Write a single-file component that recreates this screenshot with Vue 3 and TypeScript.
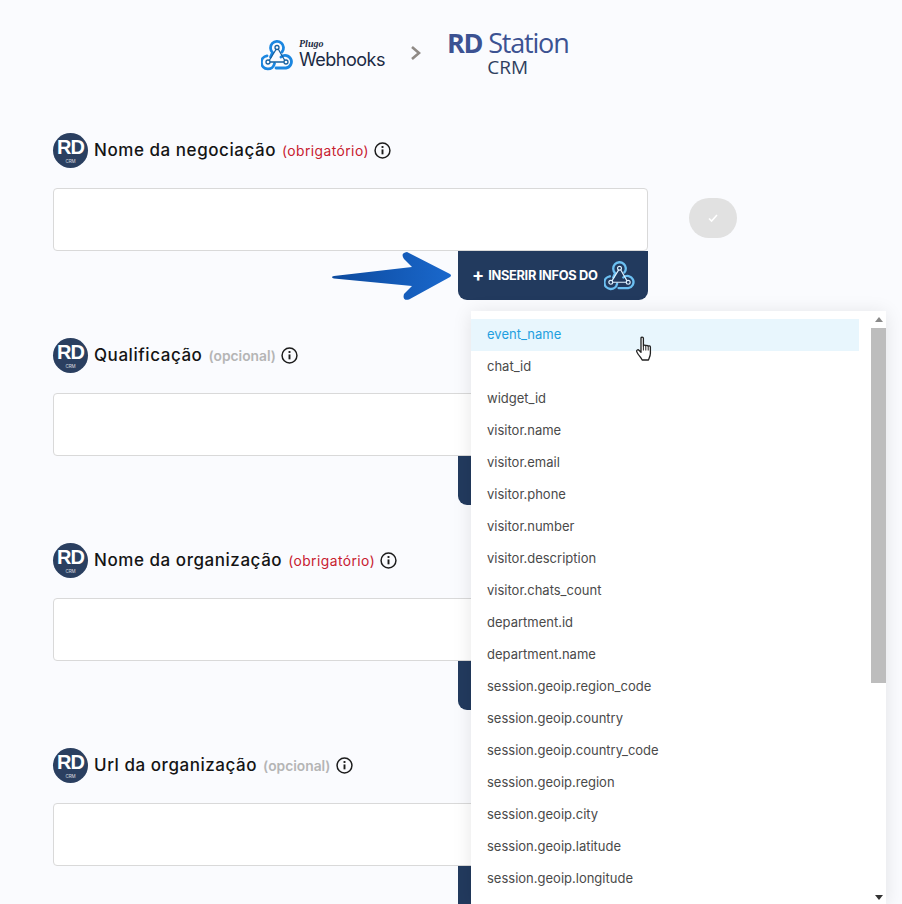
<script setup lang="ts">
interface Field {
  name: string
  note: string
  required: boolean
}

const fields: Field[] = [
  { name: 'Nome da negociação', note: '(obrigatório)', required: true },
  { name: 'Qualificação', note: '(opcional)', required: false },
  { name: 'Nome da organização', note: '(obrigatório)', required: true },
  { name: 'Url da organização', note: '(opcional)', required: false },
]

const options: string[] = [
  'event_name',
  'chat_id',
  'widget_id',
  'visitor.name',
  'visitor.email',
  'visitor.phone',
  'visitor.number',
  'visitor.description',
  'visitor.chats_count',
  'department.id',
  'department.name',
  'session.geoip.region_code',
  'session.geoip.country',
  'session.geoip.country_code',
  'session.geoip.region',
  'session.geoip.city',
  'session.geoip.latitude',
  'session.geoip.longitude',
]
</script>

<template>
  <div class="page">
    <header class="brand">
      <div class="plugo">
        <svg class="hook-logo" viewBox="0 0 32 32" fill="none" stroke="#1b86e0" stroke-width="2.800" stroke-linecap="round">
          <path d="M9.500 18 L11.500 13.500 A6.500 6.500 0 1 1 21 13" />
          <path d="M6 16.800 A6.600 6.600 0 1 0 13.500 24.500" />
          <path d="M15 29 H25 A6.300 6.300 0 1 0 20 18" />
          <g stroke="#17609f" stroke-width="1.300">
            <circle cx="16" cy="8.500" r="2" />
            <circle cx="7" cy="23" r="2" />
            <circle cx="25" cy="23" r="2" />
            <path d="M15 10.500 L8.500 21 M17.500 10.500 L23.500 21 M9.500 23 H22.500" />
          </g>
        </svg>
        <div class="plugo-text">
          <span class="plugo-small">Plugo</span>
          <span class="plugo-name">Webhooks</span>
        </div>
      </div>
      <svg class="chevron" viewBox="0 0 12 16" fill="none" stroke="#8f8a86" stroke-width="2.600">
        <path d="M2 2l7 6-7 6" />
      </svg>
      <div class="rd">
        <div class="rd-main"><b>RD</b> Station</div>
        <div class="rd-crm">CRM</div>
      </div>
    </header>

    <section v-for="(field, i) in fields" :key="field.name" class="field">
      <div class="label-row">
        <div class="avatar">
          <span class="avatar-rd">RD</span>
          <span class="avatar-crm">CRM</span>
        </div>
        <span class="label-name">{{ field.name }}</span>
        <span class="label-note" :class="{ required: field.required }">{{ field.note }}</span>
        <svg class="info" viewBox="0 0 16 16" fill="none" stroke="#1c1c1c" stroke-width="1.400">
          <circle cx="8" cy="8" r="7" />
          <path d="M8 7v4.600" stroke-width="1.800" />
          <path d="M8 3.800v1.800" stroke-width="1.800" />
        </svg>
      </div>
      <div class="input-row">
        <div class="input-col">
          <div class="input"></div>
          <div class="insert-row">
            <svg v-if="i === 0" class="arrow" viewBox="0 0 120 50">
              <defs>
                <linearGradient id="arrowFill" x1="0" y1="0" x2="1" y2="0">
                  <stop offset="0" stop-color="#0c4a9e" />
                  <stop offset="1" stop-color="#1a68cc" />
                </linearGradient>
              </defs>
              <path
                d="M0 26 Q0 25.500 2 25 L80 16 L72 8 Q68 2 75 1 L118 23 Q120 24.500 118 26 L77 48.500 Q70 50 72 43 L80 35 L2 27.500 Q0 27 0 26 Z"
                fill="url(#arrowFill)"
              />
            </svg>
            <div class="insert">
              <template v-if="i === 0">
                <span class="plus">+</span>
                <span class="insert-text">INSERIR INFOS DO</span>
                <svg class="hook-small" viewBox="0 0 32 32" fill="none" stroke="#6cc0f2" stroke-width="2.400" stroke-linecap="round">
                  <path d="M9.500 18 L11.500 13.500 A6.500 6.500 0 1 1 21 13" />
                  <path d="M6 16.800 A6.600 6.600 0 1 0 13.500 24.500" />
                  <path d="M15 29 H25 A6.300 6.300 0 1 0 20 18" />
                  <g stroke="#dff2ff" stroke-width="1.200">
                    <circle cx="16" cy="8.500" r="2" />
                    <circle cx="7" cy="23" r="2" />
                    <circle cx="25" cy="23" r="2" />
                    <path d="M15 10.500 L8.500 21 M17.500 10.500 L23.500 21 M9.500 23 H22.500" />
                  </g>
                </svg>
              </template>
            </div>
          </div>
        </div>
        <div v-if="i === 0" class="confirm">
          <svg viewBox="0 0 12 12" fill="none" stroke="#fff" stroke-width="1.600">
            <path d="M2 6.500l2.600 2.600L10 3" />
          </svg>
        </div>
      </div>
    </section>

    <div class="menu">
      <ul class="menu-list">
        <li v-for="(option, i) in options" :key="option" class="menu-item" :class="{ active: i === 0 }">
          {{ option }}
        </li>
      </ul>
      <div class="scrollbar">
        <span class="tri up"></span>
        <div class="track"><div class="thumb"></div></div>
        <span class="tri down"></span>
      </div>
    </div>

    <svg class="cursor" viewBox="0 0 20 26" fill="#fff" stroke="#222" stroke-width="1.300" stroke-linejoin="round">
      <path
        d="M6 2.200c0-1.500 2.400-1.500 2.400 0V10c0-.9 2.200-1.200 2.400 0 0-.9 2.200-1 2.400.3 .2-.8 2.200-.6 2.200.7v6.300c0 3-1.600 5.200-2 6.700H7.200C6.400 22 2.800 18.600 1.700 15.600c-.5-1.500 1.300-2.400 2.300-1.300L6 16.300Z"
      />
      <path d="M8.400 10v4.500M10.800 10.300v4.200M13.200 10.600v3.900" fill="none" stroke-width="1" />
    </svg>
  </div>
</template>

<style>
html,
body {
  margin: 0;
  background: #fafbfe;
}
</style>

<style scoped>
.page {
  position: relative;
  width: 902px;
  height: 904px;
  overflow: hidden;
  background: #fafbfe;
  font-family: Inter, 'Liberation Sans', sans-serif;
  box-sizing: border-box;
  padding: 31px 0 0 53px;
}

.brand {
  display: flex;
  align-items: flex-start;
  height: 102px;
  padding-left: 208px;
}

.plugo {
  display: flex;
  align-items: center;
  margin-top: 7px;
  width: 123px;
}

.hook-logo {
  width: 32px;
  height: 32px;
  flex: none;
  margin-right: 6px;
}

.plugo-text {
  display: flex;
  flex-direction: column;
  color: #1b2a44;
  margin-top: 1px;
}

.plugo-small {
  font-family: 'Liberation Serif', serif;
  font-style: italic;
  font-weight: 700;
  font-size: 10px;
  line-height: 10px;
}

.plugo-name {
  font-family: Inter, sans-serif;
  font-size: 18px;
  line-height: 22px;
  letter-spacing: -0.5px;
}

.chevron {
  width: 12px;
  height: 16px;
  margin: 14px 25px 0 26px;
  flex: none;
}

.rd {
  display: flex;
  flex-direction: column;
  align-items: center;
  color: #3c5292;
  margin-top: -5px;
}

.rd-main {
  font-family: 'Open Sans', sans-serif;
  font-size: 27px;
  line-height: 33px;
  letter-spacing: -1.200px;
  white-space: nowrap;
}

.rd-crm {
  font-family: 'Open Sans', sans-serif;
  font-size: 19px;
  line-height: 20px;
  margin-top: -2px;
  color: #2f3f5f;
}

.field {
  height: 205px;
}

.label-row {
  display: flex;
  align-items: center;
  height: 35px;
}

.avatar {
  width: 35px;
  height: 35px;
  border-radius: 50%;
  background: #2a3f60;
  color: #fff;
  display: flex;
  flex-direction: column;
  align-items: center;
  flex: none;
  margin-right: 6px;
}

.avatar-rd {
  font-family: 'Liberation Sans', sans-serif;
  font-weight: 700;
  font-size: 20px;
  line-height: normal;
  letter-spacing: -1px;
  margin-top: 3px;
}

.avatar-crm {
  font-size: 4.500px;
  line-height: 5px;
  opacity: 0.8;
}

.label-name {
  font-size: 17px;
  font-weight: 450;
  letter-spacing: 0.55px;
  color: #141414;
  line-height: 1;
  margin-top: -1px;
}

.label-note {
  font-size: 13.800px;
  font-weight: 600;
  color: #b5b5b5;
  margin-left: 6px;
}

.label-note.required {
  color: #c8202f;
  font-weight: 400;
  letter-spacing: 0.45px;
}

.info {
  width: 17px;
  height: 17px;
  margin-left: 5px;
  flex: none;
}

.input-row {
  display: flex;
  align-items: flex-start;
  margin-top: 20px;
}

.input-col {
  width: 595px;
  flex: none;
}

.input {
  box-sizing: border-box;
  height: 63px;
  background: #fff;
  border: 1px solid #d9d9d9;
  border-radius: 4px;
}

.insert-row {
  position: relative;
  display: flex;
  justify-content: flex-end;
}

.arrow {
  position: absolute;
  left: 279px;
  top: 0;
  width: 120px;
  height: 50px;
}

.insert {
  width: 190px;
  height: 49px;
  box-sizing: border-box;
  padding: 0 13px 0 14px;
  display: flex;
  align-items: center;
  border-radius: 0 0 9px 9px;
  background: #223a5e;
  color: #fff;
  font-weight: 700;
  font-size: 12.800px;
}

.plus {
  font-size: 18px;
  line-height: 1;
  margin-right: 4px;
  margin-top: -2px;
}

.insert-text {
  white-space: nowrap;
  letter-spacing: -0.3px;
}

.hook-small {
  width: 31px;
  height: 31px;
  margin-left: auto;
  flex: none;
}

.confirm {
  width: 48px;
  height: 40px;
  margin: 10px 0 0 41px;
  border-radius: 20px;
  background: #e1e1e1;
  display: flex;
  align-items: center;
  justify-content: center;
  flex: none;
}

.confirm svg {
  width: 12px;
  height: 12px;
}

.menu {
  position: absolute;
  left: 471px;
  top: 311px;
  width: 415px;
  height: 593px;
  background: #fff;
  box-shadow: 0 2px 18px rgba(0, 0, 0, 0.1);
  display: flex;
}

.menu-list {
  list-style: none;
  margin: 0;
  padding: 8px 0 0;
  width: 388px;
  flex: none;
}

.menu-item {
  height: 32px;
  line-height: 31px;
  padding-left: 16px;
  font-size: 13px;
  color: #4a4a4a;
}

.menu-item.active {
  background: #e8f6fd;
  color: #1f9fe0;
}

.scrollbar {
  margin-left: 12px;
  width: 15px;
  display: flex;
  flex-direction: column;
  align-items: center;
  background: #fff;
}

.tri {
  width: 0;
  height: 0;
  border-left: 4px solid transparent;
  border-right: 4px solid transparent;
  flex: none;
}

.tri.up {
  margin: 6px 0 6px;
  border-bottom: 5px solid #8a8a8a;
}

.tri.down {
  margin: 3px 0 4px;
  border-top: 5px solid #333;
}

.track {
  flex: 1;
  width: 100%;
}

.thumb {
  width: 100%;
  height: 355px;
  background: #bdbdbd;
}

.cursor {
  position: absolute;
  left: 635px;
  top: 336px;
  width: 20px;
  height: 26px;
}
</style>
